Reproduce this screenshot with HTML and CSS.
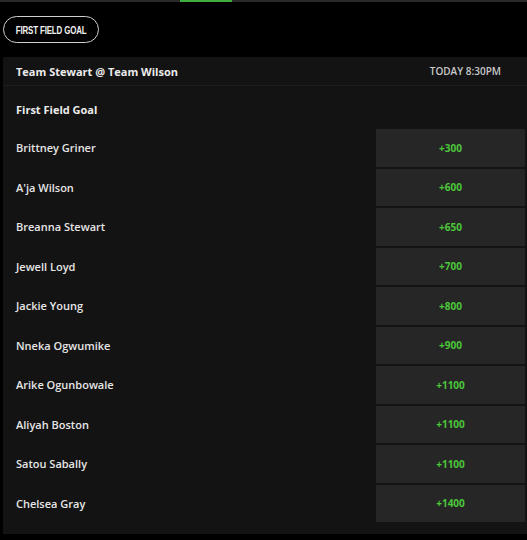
FILE: index.html
```html
<!DOCTYPE html>
<html>
<head>
<meta charset="utf-8">
<link rel="stylesheet" href="styles.css">
</head>
<body>
<div class="topbar"><div class="topbar-active"></div></div>
<div class="filters"><button class="pill"><span class="pill-label">FIRST FIELD GOAL</span></button></div>
<section class="card">
  <header class="card-head">
    <span class="matchup">Team Stewart @ Team Wilson</span>
    <span class="time">TODAY 8:30PM</span>
  </header>
  <div class="market">First Field Goal</div>
  <div class="rows">
    <div class="row"><span class="name">Brittney Griner</span><span class="odds">+300</span></div>
    <div class="row"><span class="name">A'ja Wilson</span><span class="odds">+600</span></div>
    <div class="row"><span class="name">Breanna Stewart</span><span class="odds">+650</span></div>
    <div class="row"><span class="name">Jewell Loyd</span><span class="odds">+700</span></div>
    <div class="row"><span class="name">Jackie Young</span><span class="odds">+800</span></div>
    <div class="row"><span class="name">Nneka Ogwumike</span><span class="odds">+900</span></div>
    <div class="row"><span class="name">Arike Ogunbowale</span><span class="odds">+1100</span></div>
    <div class="row"><span class="name">Aliyah Boston</span><span class="odds">+1100</span></div>
    <div class="row"><span class="name">Satou Sabally</span><span class="odds">+1100</span></div>
    <div class="row"><span class="name">Chelsea Gray</span><span class="odds">+1400</span></div>
  </div>
</section>
</body>
</html>
```
FILE: styles.css
```css
html, body {
  margin: 0;
  padding: 0;
  background: #000;
  width: 527px;
  height: 540px;
  overflow: hidden;
  font-family: "Open Sans", "DejaVu Sans", sans-serif;
  color: #e8e8e8;
}
.topbar {
  height: 2px;
  background: #2a2a2a;
}
.topbar-active {
  margin-left: 180px;
  width: 52px;
  height: 2px;
  background: #3fae3f;
}
.filters {
  padding: 14px 0 0 3px;
  height: 28px;
}
.pill {
  box-sizing: border-box;
  height: 27px;
  width: 96px;
  border: 1.5px solid #cfcfcf;
  border-radius: 14px;
  background: #000;
  padding: 0;
  display: flex;
  align-items: center;
  justify-content: center;
  overflow: hidden;
}
.pill-label {
  display: inline-block;
  white-space: nowrap;
  color: #f2f2f2;
  font-family: "Liberation Sans", "DejaVu Sans", sans-serif;
  font-weight: 700;
  font-size: 11px;
  letter-spacing: -0.2px;
  transform: scaleX(0.72);
}
.card {
  margin: 13px 0 0 3px;
  background: #131313;
  padding-bottom: 12px;
}
.card-head {
  box-sizing: border-box;
  height: 29px;
  display: flex;
  align-items: center;
  justify-content: space-between;
  padding: 0 26px 0 13px;
  border-bottom: 1px solid #1e1e1e;
}
.matchup {
  font-size: 11px;
  font-weight: 700;
  color: #ececec;
}
.time {
  font-size: 10px;
  font-weight: 600;
  color: #c8c8c8;
}
.market {
  box-sizing: border-box;
  height: 43px;
  display: flex;
  align-items: center;
  padding: 3px 0 0 13px;
  font-size: 11px;
  font-weight: 700;
  color: #ececec;
}
.rows {
  display: flex;
  flex-direction: column;
  gap: 2px;
}
.row {
  height: 37.5px;
  display: flex;
  align-items: center;
  justify-content: space-between;
  padding-left: 13px;
  padding-right: 2px;
}
.name {
  font-size: 11px;
  font-weight: 600;
  color: #e6e6e6;
}
.odds {
  width: 149px;
  height: 100%;
  background: #262626;
  display: flex;
  align-items: center;
  justify-content: center;
  color: #4cc63a;
  font-size: 10px;
  font-weight: 700;
}
```
